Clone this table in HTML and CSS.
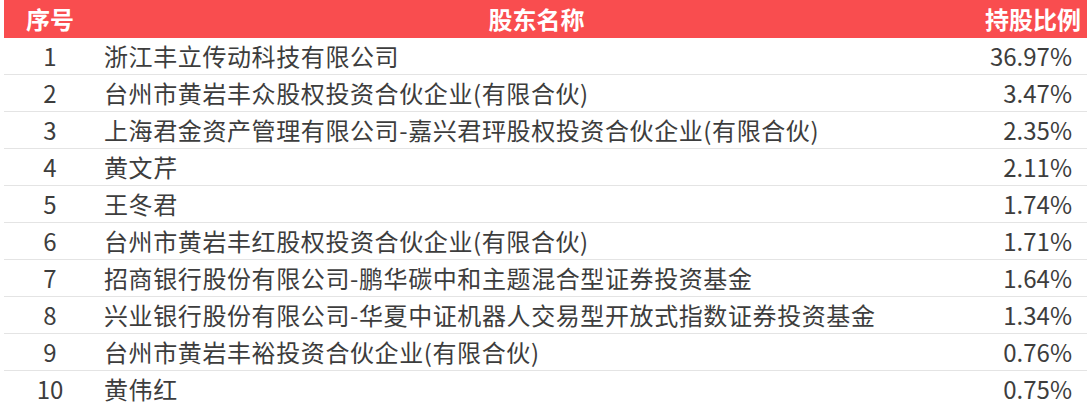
FILE: index.html
```html
<!DOCTYPE html>
<html lang="zh">
<head>
<meta charset="utf-8">
<link rel="stylesheet" href="styles.css">
</head>
<body>
<div class="holders">
  <div class="row head">
    <div class="c-no">序号</div>
    <div class="c-name">股东名称</div>
    <div class="c-pct">持股比例</div>
  </div>
  <div class="row"><div class="c-no">1</div><div class="c-name">浙江丰立传动科技有限公司</div><div class="c-pct">36.97%</div></div>
  <div class="row"><div class="c-no">2</div><div class="c-name">台州市黄岩丰众股权投资合伙企业(有限合伙)</div><div class="c-pct">3.47%</div></div>
  <div class="row"><div class="c-no">3</div><div class="c-name">上海君金资产管理有限公司-嘉兴君玶股权投资合伙企业(有限合伙)</div><div class="c-pct">2.35%</div></div>
  <div class="row"><div class="c-no">4</div><div class="c-name">黄文芹</div><div class="c-pct">2.11%</div></div>
  <div class="row"><div class="c-no">5</div><div class="c-name">王冬君</div><div class="c-pct">1.74%</div></div>
  <div class="row"><div class="c-no">6</div><div class="c-name">台州市黄岩丰红股权投资合伙企业(有限合伙)</div><div class="c-pct">1.71%</div></div>
  <div class="row"><div class="c-no">7</div><div class="c-name">招商银行股份有限公司-鹏华碳中和主题混合型证券投资基金</div><div class="c-pct">1.64%</div></div>
  <div class="row"><div class="c-no">8</div><div class="c-name">兴业银行股份有限公司-华夏中证机器人交易型开放式指数证券投资基金</div><div class="c-pct">1.34%</div></div>
  <div class="row"><div class="c-no">9</div><div class="c-name">台州市黄岩丰裕投资合伙企业(有限合伙)</div><div class="c-pct">0.76%</div></div>
  <div class="row"><div class="c-no">10</div><div class="c-name">黄伟红</div><div class="c-pct">0.75%</div></div>
</div>
</body>
</html>
```

FILE: styles.css
```css
html, body {
  margin: 0;
  padding: 0;
  background: #ffffff;
}

body {
  font-family: "Noto Sans CJK SC", "Noto Sans", sans-serif;
  font-size: 24px;
  color: #3d3d3d;
}

.holders {
  width: 1083px;
  margin-left: 4px;
}

.row {
  display: grid;
  grid-template-columns: 92px 1fr 110px;
  align-items: center;
  height: 36px;
  border-bottom: 1px solid #e4e4e4;
  line-height: 1;
  white-space: nowrap;
}

.row:last-child {
  border-bottom: none;
}

.row.head {
  height: 38px;
  background: #f94d4f;
  color: #ffffff;
  font-weight: 700;
  border-bottom: none;
}

.c-no {
  text-align: center;
}

.c-name {
  padding-left: 8px;
  letter-spacing: 0.6px;
}

.c-pct {
  text-align: right;
  padding-right: 15px;
}

.head .c-name {
  text-align: center;
  padding-left: 0;
  letter-spacing: 0;
}

.head .c-pct {
  padding-right: 6px;
}
```
